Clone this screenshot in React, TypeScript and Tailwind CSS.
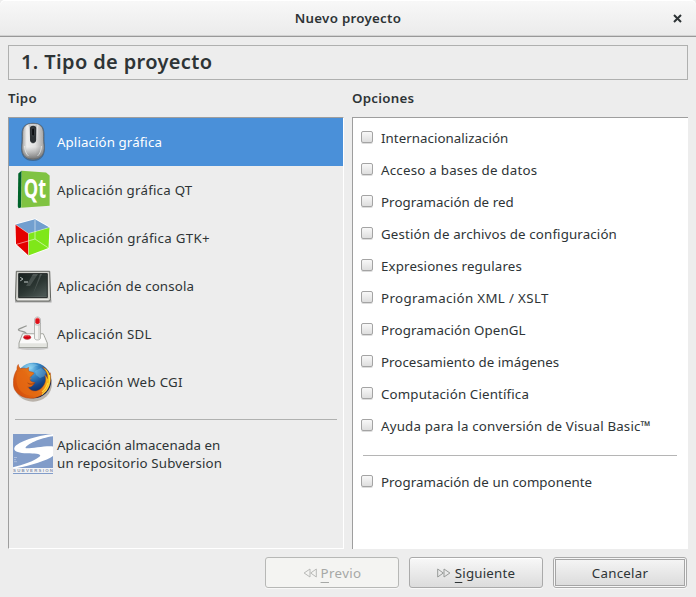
import type { ReactNode } from "react";

function MouseIcon() {
  return (
    <svg width="40" height="40" viewBox="0 0 40 40" className="shrink-0">
      <defs>
        <linearGradient id="mouseBody" x1="0" x2="1" y1="0" y2="0">
          <stop offset="0" stopColor="#9d9d9d" />
          <stop offset=".22" stopColor="#eeeeee" />
          <stop offset=".6" stopColor="#e0e0e0" />
          <stop offset="1" stopColor="#a2a2a2" />
        </linearGradient>
        <linearGradient id="mouseShade" x1="0" x2="0" y1="0" y2="1">
          <stop offset=".65" stopColor="#777" stopOpacity="0" />
          <stop offset="1" stopColor="#555" stopOpacity=".8" />
        </linearGradient>
      </defs>
      <path d="M20 .8C12 .8 8.500 5 8.500 12c0 4 .2 6-.4 11C7.200 33 11 39 20 39s12.800-6 11.900-16c-.6-5-.4-7-.4-11C31.500 5 28 .8 20 .8Z" fill="#394a5c" opacity=".55" />
      <path d="M20 1.500C12.500 1.500 9.500 5 9.500 12c0 4 .2 6-.5 11C8 32 12 37.300 20 37.300S32 32 31 23c-.7-5-.5-7-.5-11C30.500 5 27.500 1.500 20 1.500Z" fill="url(#mouseBody)" stroke="#666b70" strokeWidth=".8" />
      <path d="M20 1.500C12.500 1.500 9.500 5 9.500 12c0 4 .2 6-.5 11C8 32 12 37.300 20 37.300S32 32 31 23c-.7-5-.5-7-.5-11C30.500 5 27.500 1.500 20 1.500Z" fill="url(#mouseShade)" />
      <path d="M15 2.500c1.500 7 .5 14 3 19 1.500 1.500 2.500 1.500 4 0 2.500-5 1.500-12 3-19" fill="#c4c6c7" stroke="#f6f6f6" strokeWidth=".6" />
      <path d="M17 6c0-3 6.200-3 6.200 0v12c0 4-6.200 4-6.200 0Z" fill="#2b3033" />
      <rect x="18.700" y="6" width="2.800" height="8" rx="1.400" fill="#0b0e10" stroke="#545b60" strokeWidth=".5" />
      <path d="M11.500 24c.2 4 1.500 8 4 10M28.500 24c-.2 4-1.500 8-4 10" fill="none" stroke="#faffff" strokeWidth=".8" opacity=".7" />
    </svg>
  );
}

function QtIcon() {
  return (
    <svg width="40" height="40" viewBox="0 0 40 40" className="shrink-0 overflow-visible">
      <path d="M8.500.8 33 2.400l3.600 3.100v30.200L8.200 37.700Z" fill="#80c342" />
      <path d="M5.300 3.500 8.500.8 8 37.600l-2.400.7-.8-1.800Z" fill="#00632a" />
      <text transform="translate(10.800 28) scale(.8 1)" fontFamily="Open Sans, sans-serif" fontSize="26" fontWeight="700" fill="#fff" textLength="28" lengthAdjust="spacingAndGlyphs">Qt</text>
    </svg>
  );
}

function GtkIcon() {
  return (
    <svg width="40" height="40" viewBox="0 0 40 40" className="shrink-0">
      <path d="M2.500 6.500 22 1.300l14.500 8.200-1 20.500-20 7.500L3 26Z" fill="#fff" stroke="#fff" strokeWidth="1.600" strokeLinejoin="round" />
      <path d="M2.500 6.500 22 1.300 36.500 9.500 15.500 15.500Z" fill="#729fcf" />
      <path d="m2.500 6.500 13 9v22L3 26Z" fill="#e40000" />
      <path d="m15.500 15.500 21-6L35.500 30l-20 7.500Z" fill="#7fe719" />
      <path d="M22 2v19L3 26.500M22 21l13.500 9" fill="none" stroke="#fff" strokeWidth=".8" opacity=".65" />
      <path d="m2.500 6.500 13 9 21-6M15.500 15.500v22" fill="none" stroke="#f4f7ee" strokeWidth=".6" opacity=".7" />
    </svg>
  );
}

function TerminalIcon() {
  return (
    <svg width="40" height="40" viewBox="0 0 40 40" className="shrink-0">
      <defs>
        <linearGradient id="screen" x1="0" x2=".7" y1="0" y2="1">
          <stop offset="0" stopColor="#18201f" />
          <stop offset=".6" stopColor="#333d39" />
          <stop offset="1" stopColor="#56615e" />
        </linearGradient>
      </defs>
      <path d="M2 33.500h36.500v3H2Z" fill="#555" opacity=".45" />
      <path d="M3.300 5.300h33.400l.9 27.500-1 2.200H3.500l-1-2.200Z" fill="#cfd0cb" stroke="#62645f" />
      <path d="M4.500 33.700h31" stroke="#f4f4f1" />
      <path d="M5.700 7.600h28.600v24H5.700Z" fill="url(#screen)" stroke="#262b2a" />
      <path d="m20 8-7 12h4l8-12ZM27 8l-7 20 9-20Z" fill="#929b98" opacity=".38" />
      <path d="M6 11h28M6 13h28M6 15h28M6 17h28M6 19h28M6 21h28M6 23h28M6 25h28M6 27h28M6 29h28" stroke="#12211c" strokeWidth=".7" opacity=".5" />
      <path d="m7.300 11.300 2.600 1.700-2.600 1.800M11 16h4" fill="none" stroke="#c4ccca" strokeWidth="1" />
    </svg>
  );
}

function JoystickIcon() {
  return (
    <svg width="40" height="40" viewBox="0 0 40 40" className="shrink-0">
      <ellipse cx="20" cy="34" rx="15.500" ry="2" fill="#888" opacity=".35" />
      <path d="M13.500 20c-.3-2.500-4-2.300-6.800-3.300-4-1.500 2-2.500 7-4.900" fill="none" stroke="#969894" strokeWidth="1.200" />
      <path d="M9.500 19.800h20.800l4 9.200v4.500H6V29Z" fill="#e9eae7" stroke="#a3a59f" />
      <path d="m10.300 20.600-3.500 8.300h26.600l-3.500-8.300Z" fill="#fafaf9" />
      <path d="M7 30h26v2.700H7Z" fill="#e3e4df" />
      <ellipse cx="14.200" cy="23.300" rx="3.700" ry="2.100" fill="#d40010" stroke="#b6575b" strokeWidth=".6" />
      <path d="M11.800 22.500c1-1 3.500-1 4.300-.2" stroke="#f65b60" fill="none" />
      <path d="M21.500 9.500v14.500c0 2.600 6 2.600 6 0V9.500Z" fill="#f3f3f1" stroke="#a5a6a2" strokeWidth=".8" />
      <path d="M26 9v16" stroke="#d0d1cd" strokeWidth="1.400" />
      <path d="M21.500 10V6c0-4 6-4 6 0v4c-1 1.500-5 1.500-6 0Z" fill="#ececeb" stroke="#999" strokeWidth=".6" />
      <path d="M22.300 9V6c0-3 4.400-3 4.400 0v3c-1.200 1.400-3.400 1.400-4.400 0Z" fill="#df1018" />
      <path d="M23.200 5c.4-1 2.100-1 2.600-.2" stroke="#fa777a" fill="none" />
    </svg>
  );
}

function FirefoxIcon() {
  return (
    <svg width="40" height="40" viewBox="0 0 40 40" className="shrink-0">
      <defs>
        <radialGradient id="globe" cx=".4" cy=".15" r=".8">
          <stop offset="0" stopColor="#8dd4f4" />
          <stop offset=".3" stopColor="#388ac7" />
          <stop offset=".65" stopColor="#164589" />
          <stop offset="1" stopColor="#061e4e" />
        </radialGradient>
        <linearGradient id="foxTail" x1="0" x2="1" y1=".5" y2="0">
          <stop offset="0" stopColor="#d6510d" />
          <stop offset=".5" stopColor="#e97817" />
          <stop offset=".82" stopColor="#ffcd1c" />
          <stop offset="1" stopColor="#ffef65" />
        </linearGradient>
      </defs>
      <ellipse cx="20" cy="22" rx="19" ry="17.700" fill="#59462f" opacity=".35" />
      <circle cx="20.500" cy="18.500" r="17.800" fill="url(#globe)" />
      <path d="M9 5c5-4 13-4 17-1-3-1-5 1-7 3l-5 1-2 3-4-2ZM22 9l6-3 5 4-1 4-5 2-4-3Z" fill="#9ddbf3" opacity=".3" />
      <path d="M4 7.500c-.2-2.500.6-4.200 1.300-5 .2 2 1.100 3.300 2.500 4.200 2-.6 3.500-.6 5.200 0l2.700-1.200c-.6 2-.4 3.100.8 4.100 1.500.3 3.800.5 4.600 1.700-2 2.800-4.500 3.500-4.800 5.600.6 2 2.800 3.300 5.500 3.600-1.800 3.500-4.700 5.600-7.600 4 2.800 5 9.500 6.200 14.200 1.700 4.300-4.200 5.200-9 3.500-13.300 1 .6 2 2 2.700 3.700 0-5.500-1.500-8-5-11.400 4.500 1.800 6.500 5 7 8 .9-1.200.6-2.500.6-2.500 2 10-2 19-9.500 23-9 4.800-20.400 2.700-25.600-5.400C-.8 23.500-.2 14 4 7.500Z" fill="url(#foxTail)" stroke="#b64512" strokeWidth=".5" />
      <path d="M4.500 10c-2.400 8-.8 16.400 5 20.500 6 4.500 14.500 4.500 20.500-1-4 2.200-10 2-13.400-2.500-3-4-1.500-8.200 2.300-10.800-3-.3-5-2.200-5.800-5.200-2-1.500-5.800-2.300-8.600-1Z" fill="#e66a12" opacity=".7" />
      <path d="M36.300 13c1.300 8-1.200 15-7.300 19.500M34.800 21c-1.200 4-3.100 7-5.800 9" fill="none" stroke="#ffe643" strokeWidth="1.100" opacity=".8" />
      <path d="M13 19c2 3 6 3.200 9.500 1.500-2 2.600-5.500 3-7.500 1" fill="#8a3312" opacity=".7" />
    </svg>
  );
}

function SubversionIcon() {
  return (
    <svg width="40" height="40" viewBox="0 0 40 40" className="shrink-0">
      <path d="M0 0h40v34H0Z" fill="#819cc9" />
      <path d="M40 0C28 1 8 6 2 12.500-1 17 5 19 14 19.200c10 .3 16 .8 12 3.800C21 27 10 31 0 33.300V34h4c14-2.500 30-7.500 36-12v-9.500C34 11 14 15.500 12.500 14 13 10.500 27 4 40 2.300Z" fill="#fff" />
      <path d="M1 23.500h3M1 25.700h2M1 27.700h3" stroke="#b7c5df" strokeWidth=".8" />
      <path d="M0 34h40v4.600H0Z" fill="#f4f5f7" />
      <text x="0" y="38.300" fontFamily="Liberation Sans, sans-serif" fontWeight="700" fontSize="4.400" fill="#8a94ab" textLength="40">SUBVERSION</text>
      <path d="M0 39.500h40" stroke="#819cc9" />
    </svg>
  );
}

const projectTypes: { label: string; icon: ReactNode; tracking: string }[] = [
  { label: "Apliación gráfica", icon: <MouseIcon />, tracking: "tracking-[0.1px]" },
  { label: "Aplicación gráfica QT", icon: <QtIcon />, tracking: "tracking-[0.24px]" },
  { label: "Aplicación gráfica GTK+", icon: <GtkIcon />, tracking: "tracking-[0.3px]" },
  { label: "Aplicación de consola", icon: <TerminalIcon />, tracking: "tracking-[0.15px]" },
  { label: "Aplicación SDL", icon: <JoystickIcon />, tracking: "tracking-[0.28px]" },
  { label: "Aplicación Web CGI", icon: <FirefoxIcon />, tracking: "tracking-[0.3px]" },
];

const options = [
  { label: "Internacionalización", tracking: "tracking-[0.05px]" },
  { label: "Acceso a bases de datos", tracking: "tracking-[0.24px]" },
  { label: "Programación de red", tracking: "tracking-[0.06px]" },
  { label: "Gestión de archivos de configuración", tracking: "tracking-[0.14px]" },
  { label: "Expresiones regulares", tracking: "tracking-[0.15px]" },
  { label: "Programación XML / XSLT", tracking: "tracking-[0.36px]" },
  { label: "Programación OpenGL", tracking: "tracking-[0.11px]" },
  { label: "Procesamiento de imágenes", tracking: "tracking-[0.04px]" },
  { label: "Computación Científica", tracking: "tracking-[0.15px]" },
  { label: "Ayuda para la conversión de Visual Basic™", tracking: "tracking-[0.18px]" },
];

function Option({ label, tracking }: { label: string; tracking: string }) {
  return (
    <label className="flex h-8 items-center gap-2">
      <input type="checkbox" className="-mt-0.5 size-3 shrink-0 appearance-none rounded-[2px] border border-[#a4a4a4] bg-linear-to-b from-[#f8f8f8] to-[#dedede] shadow-[0_1px_0_#ddd]" />
      <span className={tracking}>{label}</span>
    </label>
  );
}

function ArrowPair({ back = false }: { back?: boolean }) {
  return (
    <svg width="14" height="10" viewBox="0 0 14 10" className={back ? "-scale-x-100" : ""} fill="none" stroke={back ? "#b8b9b7" : "#979a98"}>
      <path d="M.7 1v8l5.600-4ZM7 1v8l5.900-4Z" />
    </svg>
  );
}

export default function App() {
  return (
    <div className="flex h-[597px] w-[696px] flex-col overflow-hidden bg-[#ededed] font-['Noto_Sans',sans-serif] text-[13.3px] leading-[18px] text-[#2e3436]">
      <header className="grid h-[37px] shrink-0 grid-cols-[1fr_auto_1fr] items-center rounded-t-[5px] border-b border-[#999] bg-linear-to-b from-[#f8f8f8] to-[#ebebeb] shadow-[inset_0_1px_0_#fff,inset_0_-1px_0_#d2d2d2]">
        <h1 className="col-start-2 text-[13.3px] font-semibold tracking-[0.28px]">Nuevo proyecto</h1>
        <button className="mr-[14px] justify-self-end">
          <svg width="9" height="9" viewBox="0 0 9 9"><path d="m1 1 7 7m0-7L1 8" stroke="#2e3436" strokeWidth="2" /></svg>
        </button>
      </header>
      <main className="flex flex-col px-2 pt-2">
        <div className="flex h-[35px] items-center border border-[#afb0af] pb-0.5 pl-3">
          <h2 className="text-[20px] leading-6 font-semibold tracking-[0.36px]">1. Tipo de proyecto</h2>
        </div>
        <div className="grid grid-cols-[336px_336px] gap-x-2">
          <section>
            <h3 className="flex h-[37px] items-center pb-0.5 font-semibold tracking-[0.25px]">Tipo</h3>
            <div className="h-[432px] border border-[#9e9e9e] border-r-white border-b-white">
              <ul>
                {projectTypes.map(({ label, icon, tracking }, index) => (
                  <li key={label} className={`flex h-12 items-center gap-1 pl-1 ${index === 0 ? "bg-[#4a90d9] text-white" : ""}`}>
                    {icon}<span className={tracking}>{label}</span>
                  </li>
                ))}
              </ul>
              <hr className="mx-[6px] mt-[13px] border-[#b0b1b0]" />
              <div className="mt-[14px] flex items-center gap-1 pl-1">
                <SubversionIcon />
                <div>
                  <p className="tracking-[0.05px]">Aplicación almacenada en</p>
                  <p className="tracking-[0.16px]">un repositorio Subversion</p>
                </div>
              </div>
            </div>
          </section>
          <section>
            <h3 className="flex h-[37px] items-center pb-0.5 font-semibold tracking-[0.25px]">Opciones</h3>
            <div className="h-[432px] border-t border-l border-[#9e9e9e] bg-white pt-1 pl-2">
              {options.map((option) => <Option key={option.label} {...option} />)}
              <hr className="mt-[13px] mr-[11px] mb-[10px] ml-[2px] border-[#b5b5b5]" />
              <Option label="Programación de un componente" tracking="tracking-[0.04px]" />
            </div>
          </section>
        </div>
      </main>
      <footer className="mt-2 flex h-[31px] justify-end gap-[10px] pr-[9px]">
        <button disabled className="flex w-[134px] items-center justify-center gap-1 rounded-[3px] border border-[#b7b8b6] bg-[#f4f4f2] tracking-[0.35px] text-[#a6a8a6] shadow-[0_1px_0_#f8f8f8]">
          <ArrowPair back /><span><span className="underline underline-offset-4">P</span>revio</span>
        </button>
        <button className="flex w-[134px] items-center justify-center gap-1 rounded-[3px] border border-[#aaa] bg-linear-to-b from-[#f8f8f8] to-[#dcdcdc] tracking-[0.2px] shadow-[0_1px_0_#f8f8f8,inset_0_1px_0_#fff]">
          <ArrowPair /><span><span className="underline underline-offset-4">S</span>iguiente</span>
        </button>
        <button className="w-[134px] rounded-[3px] border border-[#aaa] bg-[#f7f7f7] p-px tracking-[0.25px] shadow-[0_1px_0_#f8f8f8]">
          <span className="flex h-full items-center justify-center border border-[#a5a5a5] bg-linear-to-b from-[#f4f4f4] to-[#dcdcdc]">Cancelar</span>
        </button>
      </footer>
    </div>
  );
}
